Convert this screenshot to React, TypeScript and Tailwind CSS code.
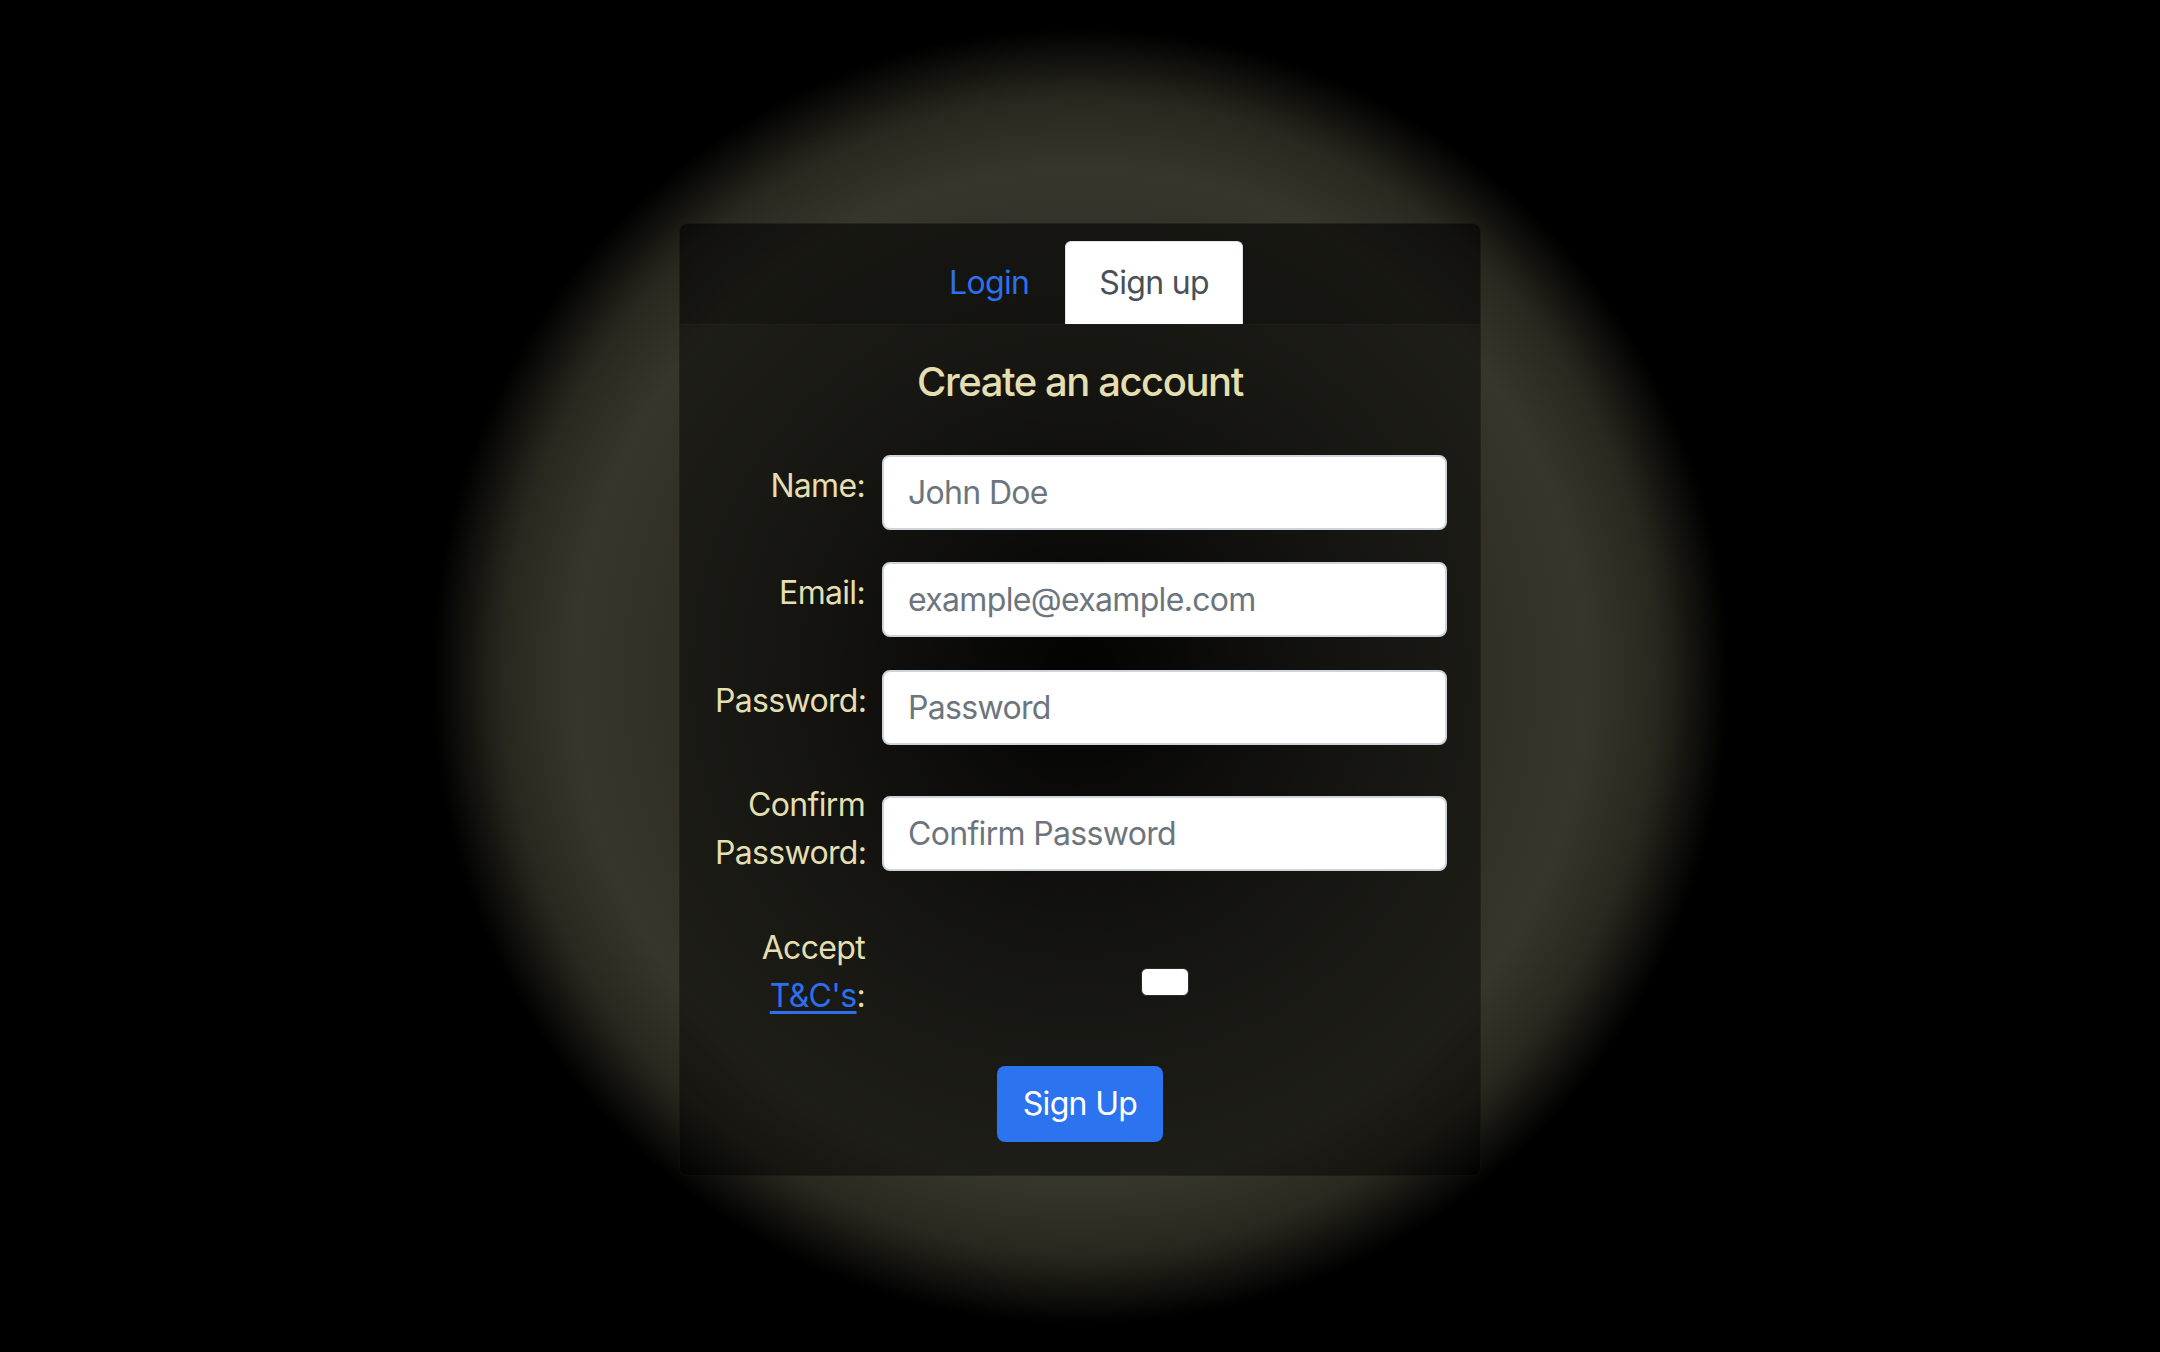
import React, { useState } from 'react';

const labelText = 'text-right text-[32px] leading-[48px] text-[#e4dfb0]';
const inputBase =
  'w-full h-[75px] rounded-[8px] border-2 border-[#ced4da] bg-white px-[24px] text-[32px] text-[#212529] placeholder:text-[#6c757d] outline-none';

const App: React.FC = () => {
  const [tab, setTab] = useState<'login' | 'signup'>('signup');
  const [accepted, setAccepted] = useState(false);

  return (
    <div
      className="w-full min-h-[1352px] flex justify-center items-start tracking-[-0.042em] bg-black bg-[radial-gradient(circle_648px_at_center,#050504_0%,#1c1b16_28%,#2d2c24_55%,#37362b_78%,#29281f_89%,#000_100%)]"
      style={{ fontFamily: 'Inter, "Noto Sans", sans-serif' }}
    >
      <div className="mt-[223px] w-[802px] rounded-[8px] bg-black/45 border border-white/[0.03]">
        {/* Tabs */}
        <div className="h-[101px] pt-[18px] flex justify-center items-end gap-[4px] border-b border-white/[0.04] bg-black/20 rounded-t-[8px]">
          <button
            onClick={() => setTab('login')}
            className={`h-[83px] flex items-center px-[32px] text-[32px] leading-[48px] ${
              tab === 'login' ? 'bg-white text-[#495057] rounded-t-[6px]' : 'text-[#2c70f0]'
            }`}
          >
            Login
          </button>
          <button
            onClick={() => setTab('signup')}
            className={`h-[83px] flex items-center px-[33px] text-[32px] leading-[48px] rounded-t-[6px] border border-b-0 ${
              tab === 'signup' ? 'bg-white text-[#495057] border-[#dee2e6]' : 'text-[#2c70f0] border-transparent'
            }`}
          >
            Sign up
          </button>
        </div>

        {/* Body */}
        <div className="px-[35px] pt-[33px] pb-[33px]">
          <h5 className="text-center text-[40px] leading-[48px] font-medium tracking-[-0.036em] text-[#e4dfb0] mb-[49px]">
            Create an account
          </h5>

          <form onSubmit={(e) => e.preventDefault()}>
            <div className="grid grid-cols-[150px_565px] gap-x-[17px] items-start">
              <label className={`${labelText} pt-[7px]`}>Name:</label>
              <input className={inputBase} placeholder="John Doe" />
            </div>

            <div className="mt-[32px] grid grid-cols-[150px_565px] gap-x-[17px] items-start">
              <label className={`${labelText} pt-[7px]`}>Email:</label>
              <input className={inputBase} type="email" placeholder="example@example.com" />
            </div>

            <div className="mt-[33px] grid grid-cols-[150px_565px] gap-x-[17px] items-start">
              <label className={`${labelText} pt-[7px]`}>Password:</label>
              <input className={inputBase} type="password" placeholder="Password" />
            </div>

            <div className="mt-[29px] grid grid-cols-[150px_565px] gap-x-[17px] items-start">
              <label className={`${labelText} py-[7px]`}>
                Confirm
                <br />
                Password:
              </label>
              <input className={`${inputBase} mt-[22px]`} type="password" placeholder="Confirm Password" />
            </div>

            <div className="mt-[33px] grid grid-cols-[150px_565px] gap-x-[17px] items-start">
              <label className={`${labelText} py-[7px]`}>
                Accept
                <br />
                <a href="#" className="text-[#2c70f0] underline underline-offset-[4px]">
                  T&amp;C's
                </a>
                :
              </label>
              <div className="flex justify-center pt-[51px]">
                <input
                  type="checkbox"
                  checked={accepted}
                  onChange={(e) => setAccepted(e.target.checked)}
                  className="appearance-none w-[48px] h-[28px] rounded-[6px] bg-white border border-[#2a2a26]"
                />
              </div>
            </div>

            <div className="mt-[39px] flex justify-center">
              <button
                type="submit"
                className="h-[76px] px-[26px] rounded-[8px] bg-[#2c73f0] text-white text-[32px] leading-[48px]"
              >
                Sign Up
              </button>
            </div>
          </form>
        </div>
      </div>
    </div>
  );
};

export default App;
